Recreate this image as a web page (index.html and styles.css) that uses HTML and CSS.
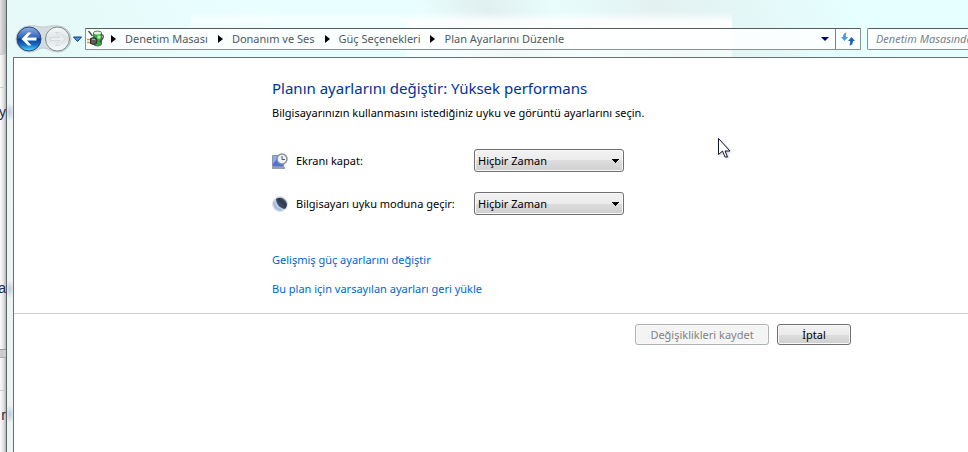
FILE: index.html
```html
<!DOCTYPE html>
<html lang="tr">
    <head>
        <meta charset="UTF-8">
        <title>Plan Ayarlarını Düzenle</title>
        <link rel="stylesheet" href="styles.css">
    </head>
    <body>
        <div class="behind">
            <div class="behind-title"></div>
            <span class="behind-row">y</span>
            <span class="behind-row tall">na</span>
            <div class="behind-split"></div>
            <span class="behind-row last">r</span>
        </div>
        <div class="window">
            <header class="toolbar">
                <svg class="nav" width="72" height="28" viewBox="0 0 72 28">
                    <defs>
                        <linearGradient id="blue" x1="0" y1="0" x2="0" y2="1">
                            <stop offset="0" stop-color="#8fb0e4"/>
                            <stop offset=".45" stop-color="#2d62b8"/>
                            <stop offset=".5" stop-color="#0b3b96"/>
                            <stop offset=".75" stop-color="#1470c8"/>
                            <stop offset="1" stop-color="#5fdcff"/>
                        </linearGradient>
                        <linearGradient id="pale" x1="0" y1="0" x2="0" y2="1">
                            <stop offset="0" stop-color="#f4f8f8"/>
                            <stop offset=".5" stop-color="#dde5e6"/>
                            <stop offset="1" stop-color="#f6fdfd"/>
                        </linearGradient>
                    </defs>
                    <path d="M14 1C21 0 22 2 28 2S35 0 43 1A13 13 0 0 1 43 27C36 27 33 23 28 23S21 27 14 27A13 13 0 0 1 14 1z" fill="#d3dcde" stroke="#c0cacc"/>
                    <circle cx="14" cy="14" r="12" fill="url(#blue)" stroke="#28477e"/>
                    <path d="M6.500 14l6.500-6.500h3.500L12 12.500h9.500v3H12l4.500 5H13z" fill="#fff"/>
                    <circle cx="42.500" cy="14" r="12" fill="url(#pale)" stroke="#808b8f"/>
                    <path d="M50.500 14L44 7.500h-3.500l4.500 5h-9.500v3H45l-4.500 5H44z" fill="#e9eeef" stroke="#c9d1d3" stroke-width=".7"/>
                    <path d="M58.500 12h8l-4 4.500z" fill="#3c9ae8" stroke="#123c78"/>
                </svg>
                <nav class="address">
                    <svg class="plan-icon" width="18" height="18" viewBox="0 0 18 18">
                        <path d="M6.500 3q0-2 4-2t4 2v11q0 2-4 2t-4-2z" fill="#36a83c" stroke="#5c7a60"/>
                        <ellipse cx="10.500" cy="3" rx="3.500" ry="1.500" fill="#e2f2df"/>
                        <path d="M12 5.500v3" stroke="#b8f4a8" stroke-width="3"/>
                        <path d="M1.500 1l4 5M14 5q3-1 2 3l-3 4" fill="none" stroke="#444" stroke-width="1.300"/>
                        <path d="M0 9.500h4M0 12.500h4" stroke="#d79a22" stroke-width="1.500"/>
                        <path d="M3.500 8.500l3-1q3.500 0 3.500 3.500t-3.500 3.500l-3-1z" fill="#5a5c60" stroke="#2c2c2c"/>
                        <path d="M5 9.500h3" stroke="#aaa"/>
                    </svg>
                    <svg class="arrow" width="5" height="8" viewBox="0 0 5 8"><path d="M0 0l5 4-5 4z"/></svg>
                    <a href="#">Denetim Masası</a>
                    <svg class="arrow" width="5" height="8" viewBox="0 0 5 8"><path d="M0 0l5 4-5 4z"/></svg>
                    <a href="#">Donanım ve Ses</a>
                    <svg class="arrow" width="5" height="8" viewBox="0 0 5 8"><path d="M0 0l5 4-5 4z"/></svg>
                    <a href="#">Güç Seçenekleri</a>
                    <svg class="arrow" width="5" height="8" viewBox="0 0 5 8"><path d="M0 0l5 4-5 4z"/></svg>
                    <a href="#">Plan Ayarlarını Düzenle</a>
                    <button class="history" aria-label="Önceki konumlar">
                        <svg width="8" height="4" viewBox="0 0 8 4"><path d="M0 0h8L4 4z" fill="#00006a"/></svg>
                    </button>
                    <button class="refresh" aria-label="Yenile">
                        <svg width="14" height="14" viewBox="0 0 14 14">
                            <path d="M5.500.5Q2 1 2 5H0l3.500 4L7 5H5Q4.500 2.500 5.500.5z" fill="#4a9be4"/>
                            <path d="M8.500 13.500Q12 13 12 9h2l-3.500-4L7 9h2q.5 2.500-.5 4.500z" fill="#2462b8"/>
                        </svg>
                    </button>
                </nav>
                <input class="search" type="text" placeholder="Denetim Masasında Ara" aria-label="Ara">
            </header>
            <main class="client">
                <section class="content">
                    <h1>Planın ayarlarını değiştir: Yüksek performans</h1>
                    <p>Bilgisayarınızın kullanmasını istediğiniz uyku ve görüntü ayarlarını seçin.</p>
                    <form class="settings" id="plan">
                        <svg width="16" height="16" viewBox="0 0 16 16">
                            <path d="M.5 2.500h11v11H.5z" fill="#4f70d6" stroke="#8793b0"/>
                            <path d="M1 3h6L1 11z" fill="#8eabf0"/>
                            <path d="M0 15h13" stroke="#98a0ac" stroke-width="2"/>
                            <circle cx="10" cy="6" r="5" fill="#eef3f6" stroke="#8a939b" stroke-width="1.500"/>
                            <path d="M10 3v3.500h3" fill="none" stroke="#4a5660"/>
                        </svg>
                        <label for="screen">Ekranı kapat:</label>
                        <select id="screen"><option>Hiçbir Zaman</option></select>
                        <svg width="16" height="16" viewBox="0 0 16 16">
                            <defs>
                                <linearGradient id="dark" x1="1" y1="0" x2="0" y2="1">
                                    <stop offset="0" stop-color="#75839a"/>
                                    <stop offset=".4" stop-color="#2c374c"/>
                                    <stop offset="1" stop-color="#5b6b86"/>
                                </linearGradient>
                            </defs>
                            <circle cx="8" cy="8" r="7.500" fill="#c0cee2" stroke="#dde3ea"/>
                            <path d="M4 3Q9 0 13 4t0 9Q8 12 6 9T4 3z" fill="url(#dark)"/>
                            <path d="M2 6q0 6 7 8" fill="none" stroke="#a3bbe0" stroke-width="2"/>
                        </svg>
                        <label for="sleep">Bilgisayarı uyku moduna geçir:</label>
                        <select id="sleep"><option>Hiçbir Zaman</option></select>
                    </form>
                    <div class="links">
                        <a href="#">Gelişmiş güç ayarlarını değiştir</a>
                        <a href="#">Bu plan için varsayılan ayarları geri yükle</a>
                    </div>
                </section>
                <footer class="actions">
                    <button class="save" form="plan" disabled>Değişiklikleri kaydet</button>
                    <button class="cancel" type="button">İptal</button>
                </footer>
            </main>
        </div>
        <svg class="cursor" width="13" height="21" viewBox="0 0 13 21">
            <path d="M.5.5v16l4-3.500 2.500 6h2.500l-2.500-6h5z" fill="#fff" stroke="#101430"/>
        </svg>
    </body>
</html>
```

FILE: styles.css
```css
*{
    box-sizing:border-box;
}

body{
    margin:0;
    display:flex;
    min-height:100vh;
    overflow:hidden;
    background-color:#fff;
    font-family:'Noto Sans', 'Open Sans', sans-serif;
    font-size:11px;
    line-height:16px;
    color:#000;
}

a{
    color:#0066cc;
    text-decoration:none;
}

/* slice of the window behind */
.behind{
    width:6px;
    flex:none;
    display:flex;
    flex-direction:column;
    overflow:hidden;
    background:linear-gradient(to right, #fafafa, #e8e8e8 50%, #b8b8b8);
}

.behind-title{
    height:55px;
    background:linear-gradient(to right, #e4e4e4, #b0b0b0);
    border-bottom:1px solid #ccc;
}

.behind-row{
    display:flex;
    justify-content:flex-end;
    margin-top:32px;
    padding-top:16px;
    height:48px;
    border-top:1px solid #ccc;
    font-family:'Liberation Sans', sans-serif;
    font-size:14px;
    color:#222a50;
}

.tall{
    margin-top:0;
    border-top:none;
    padding-top:145px;
    height:214px;
}

.behind-split{
    height:9px;
    background-color:#ccc;
    border-top:1px solid #999;
    border-bottom:1px solid #aaa;
}

.last{
    height:60px;
}

.window{
    flex:1;
    min-width:0;
    display:flex;
    flex-direction:column;
    padding-left:6px;
    border-left:1px solid #5a6464;
    background:
        radial-gradient(5px 9px at 3px 112px, #c0cde0, transparent),
        radial-gradient(5px 9px at 3px 289px, #c0cde0, transparent),
        radial-gradient(5px 9px at 3px 414px, #c0cde0, transparent),
        linear-gradient(#e9ffff, #edf5f5 100px, #eef3f3);
}

/* glass tint with the pale blur of the page behind it */
.toolbar{
    display:flex;
    align-items:center;
    height:57px;
    margin-left:-6px;
    padding:20px 0 0 8px;
    background:
        linear-gradient(transparent 12px, rgba(255, 255, 255, .9) 22px, rgba(255, 255, 255, .5)) 400px 0 / 325px 57px no-repeat,
        linear-gradient(transparent 12px, rgba(255, 255, 255, .7) 20px, transparent 32px) 184px 0 / 216px 57px no-repeat,
        linear-gradient(60deg, #e6f8f8 0, #e9ffff 30%, #e9ffff 44%, #e1efef 51%, #e9fdfd 58%, #e4f1f1 68%, #e4f6f6 76%, #e6ffff 88%);
}

.nav{
    flex:none;
}

.address{
    flex:1;
    min-width:0;
    display:flex;
    align-items:center;
    height:22px;
    margin:0 6px 0 -2px;
    padding-left:1px;
    border:1px solid #8a9292;
    border-top-color:#555c5c;
    border-radius:1px;
    background-color:rgba(255, 255, 255, .85);
}

.address a{
    color:#4e5a60;
    white-space:nowrap;
}

.plan-icon{
    flex:none;
}

.arrow{
    flex:none;
    margin:0 9px 0 10px;
}

.plan-icon + .arrow{
    margin-left:6px;
}

.address button{
    border:none;
    padding:0;
    height:20px;
    background:none;
    display:flex;
    align-items:center;
    justify-content:center;
}

.address .history{
    width:20px;
    margin-left:auto;
}

.address .refresh{
    width:25px;
    border-left:1px solid #7a8282;
}

.search{
    flex:none;
    width:101px;
    height:22px;
    padding:0 0 0 8px;
    border:1px solid #8a9292;
    border-top-color:#555c5c;
    border-right:none;
    border-radius:2px 0 0 2px;
    background-color:rgba(255, 255, 255, .85);
    font:italic 11px 'Noto Sans', 'Open Sans', sans-serif;
}

.search::placeholder{
    color:#7a8488;
}

.client{
    flex:1;
    border-top:1px solid #697171;
    border-left:1px solid #697171;
    background-color:#fff;
}

.content{
    padding:19px 20px 16px 258px;
    border-bottom:1px solid #ccc;
}

h1{
    margin:0;
    font-size:15px;
    font-weight:normal;
    line-height:22px;
    color:#003399;
}

p{
    margin:6px 0 28px;
}

.settings{
    display:grid;
    grid-template-columns:16px 170px 150px;
    column-gap:8px;
    row-gap:20px;
    align-items:center;
}

.settings label{
    white-space:nowrap;
}

select{
    appearance:none;
    height:23px;
    padding:0 20px 1px 3px;
    border:1px solid #707070;
    border-radius:3px;
    box-shadow:inset 0 0 0 1px #f8f8f8;
    background:
        linear-gradient(to top right, transparent 50%, #000 50%) right 7px top 9px / 4px 4px no-repeat,
        linear-gradient(to top left, transparent 50%, #000 50%) right 3px top 9px / 4px 4px no-repeat,
        linear-gradient(#f2f2f2, #ebebeb 50%, #dddddd 50%, #cfcfcf);
    font:11px 'Noto Sans', 'Open Sans', sans-serif;
    color:#000;
}

.links{
    display:flex;
    flex-direction:column;
    align-items:flex-start;
    gap:13px;
    margin-top:37px;
}

.actions{
    display:flex;
    justify-content:flex-end;
    gap:8px;
    padding:10px 117px 10px 20px;
}

.actions button{
    height:21px;
    padding:0 0 1px;
    border:1px solid #707070;
    border-radius:3px;
    box-shadow:inset 0 0 0 1px #f8f8f8;
    background:linear-gradient(#f2f2f2, #ebebeb 50%, #dddddd 50%, #cfcfcf);
    font:11px 'Noto Sans', 'Open Sans', sans-serif;
    color:#000;
}

.actions .save{
    width:134px;
    border-color:#adb2b5;
    background:#f4f4f4;
    color:#838383;
}

.actions .cancel{
    width:74px;
}

.cursor{
    position:absolute;
    left:718px;
    top:138px;
    filter:drop-shadow(1px 1px 1px rgba(0, 0, 0, .2));
}
```
